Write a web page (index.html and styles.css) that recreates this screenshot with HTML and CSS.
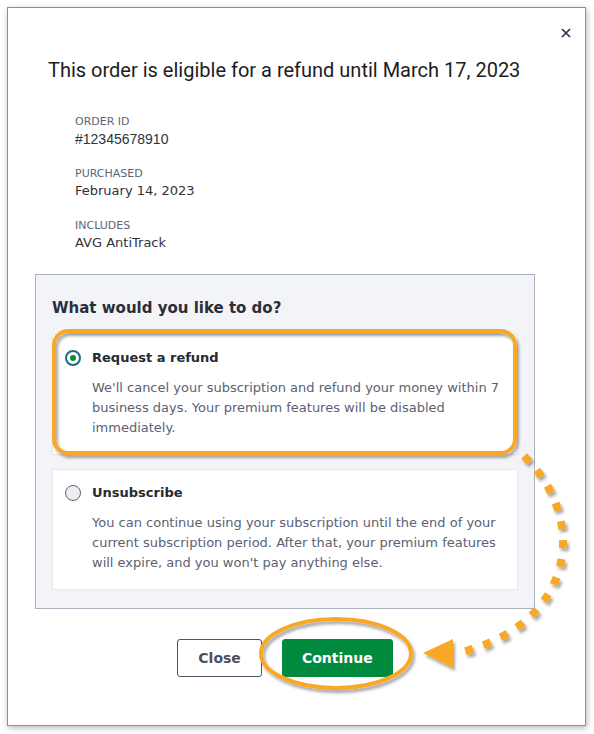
FILE: index.html
```html
<!DOCTYPE html>
<html lang="en">
<head>
<meta charset="utf-8">
<title>Refund</title>
<link rel="stylesheet" href="styles.css">
</head>
<body>
<div class="dialog">
  <div class="close-row">
    <svg class="close-x" width="10" height="10" viewBox="0 0 10 10"><path d="M1 1 L9 9 M9 1 L1 9" stroke="#2a3650" stroke-width="1.7" fill="none"/></svg>
  </div>
  <h1 class="title">This order is eligible for a refund until March 17, 2023</h1>
  <dl class="details">
    <div class="group">
      <dt class="label">ORDER ID</dt>
      <dd class="value value-id">#12345678910</dd>
    </div>
    <div class="group">
      <dt class="label">PURCHASED</dt>
      <dd class="value">February 14, 2023</dd>
    </div>
    <div class="group">
      <dt class="label">INCLUDES</dt>
      <dd class="value">AVG AntiTrack</dd>
    </div>
  </dl>
  <div class="panel">
    <h2 class="question">What would you like to do?</h2>
    <div class="card">
      <div class="card-head">
        <span class="radio radio-on"><span class="dot"></span></span>
        <span class="option">Request a refund</span>
      </div>
      <p class="desc">We'll cancel your subscription and refund your money within 7 business days. Your premium features will be disabled immediately.</p>
    </div>
    <div class="card">
      <div class="card-head">
        <span class="radio"></span>
        <span class="option">Unsubscribe</span>
      </div>
      <p class="desc">You can continue using your subscription until the end of your current subscription period. After that, your premium features will expire, and you won't pay anything else.</p>
    </div>
  </div>
  <div class="actions">
    <button class="btn btn-close">Close</button>
    <button class="btn btn-continue">Continue</button>
  </div>
</div>
<svg class="annot" width="594" height="734" viewBox="0 0 594 734">
  <defs>
    <filter id="sh" x="-20%" y="-20%" width="140%" height="140%">
      <feDropShadow dx="2" dy="3" stdDeviation="1.6" flood-color="#000" flood-opacity="0.35"/>
    </filter>
  </defs>
  <g filter="url(#sh)" fill="none" stroke="#f9a825">
    <rect x="54" y="331" width="461" height="122" rx="14" ry="14" stroke-width="4"/>
    <ellipse cx="336" cy="653.5" rx="75" ry="34.5" stroke-width="4"/>
    <path d="M524,456 C590,520 575,625 458,653" stroke-width="8" stroke-dasharray="8 11"/>
    <polygon points="423,653 453,639 453,668" fill="#f9a825" stroke="none"/>
  </g>
</svg>
</body>
</html>
```
FILE: styles.css
```css
html, body {
  margin: 0;
  padding: 0;
  background: #ffffff;
}
body {
  position: relative;
  width: 594px;
  height: 734px;
  overflow: hidden;
  font-family: "DejaVu Sans", Verdana, sans-serif;
}
.dialog {
  box-sizing: border-box;
  margin: 7px 0 0 7px;
  width: 579px;
  height: 719px;
  background: #ffffff;
  border: 1px solid #8f8f8f;
  box-shadow: 1px 2px 6px rgba(0, 0, 0, 0.28);
}
.close-row {
  display: flex;
  justify-content: flex-end;
  padding: 20px 14px 0 0;
  height: 10px;
}
.close-x {
  display: block;
}
.title {
  margin: 18px 0 0 40px;
  font-family: Roboto, "Liberation Sans", sans-serif;
  font-weight: 400;
  font-size: 20px;
  line-height: 28px;
  color: #1c1c1f;
}
.details {
  margin: 31px 0 0 67px;
  padding: 0;
}
.group {
  margin-bottom: 19px;
}
.group:last-child {
  margin-bottom: 0;
}
.label {
  font-size: 11px;
  line-height: 14px;
  color: #5e6476;
}
.value {
  margin: 1px 0 0 0;
  font-size: 13px;
  line-height: 18px;
  color: #30333a;
}
.value-id {
  font-family: "Liberation Sans", Arial, sans-serif;
  font-size: 14px;
}
.panel {
  box-sizing: border-box;
  margin: 22px 0 0 27px;
  width: 500px;
  padding: 23px 16px 18px 16px;
  background: #f3f4f8;
  border: 1px solid #aab1bd;
}
.question {
  margin: 0 0 16px 0;
  font-size: 15px;
  font-weight: 700;
  line-height: 20px;
  color: #2a2e38;
}
.card {
  background: #ffffff;
  border: 1px solid #e6e8ee;
  padding: 15px 12px 16px 12px;
}
.card + .card {
  margin-top: 14px;
}
.card-head {
  display: flex;
  align-items: center;
  gap: 11px;
  height: 16px;
}
.radio {
  box-sizing: border-box;
  width: 16px;
  height: 16px;
  border-radius: 50%;
  border: 1.5px solid #5d6474;
  background: #eceef2;
  display: flex;
  align-items: center;
  justify-content: center;
  flex: none;
}
.radio-on {
  border: 2px solid #1c6a86;
  background: #ffffff;
}
.dot {
  width: 6px;
  height: 6px;
  border-radius: 50%;
  background: #0b8a3e;
}
.option {
  font-size: 13px;
  font-weight: 700;
  line-height: 16px;
  color: #262a33;
}
.desc {
  margin: 12px 0 0 27px;
  font-size: 13px;
  line-height: 20px;
  color: #5b6173;
}
.actions {
  display: flex;
  justify-content: center;
  gap: 20px;
  width: 500px;
  margin: 30px 0 0 27px;
}
.btn {
  box-sizing: border-box;
  height: 38px;
  padding: 0 20px;
  border-radius: 3px;
  font-family: "DejaVu Sans", Verdana, sans-serif;
  font-size: 14px;
  font-weight: 700;
}
.btn-close {
  background: #ffffff;
  border: 1px solid #4c5466;
  color: #4a5163;
}
.btn-continue {
  background: #008a3e;
  border: 1px solid #008a3e;
  color: #ffffff;
  padding: 0 19px;
}
.annot {
  position: absolute;
  top: 0;
  left: 0;
  pointer-events: none;
}
```
